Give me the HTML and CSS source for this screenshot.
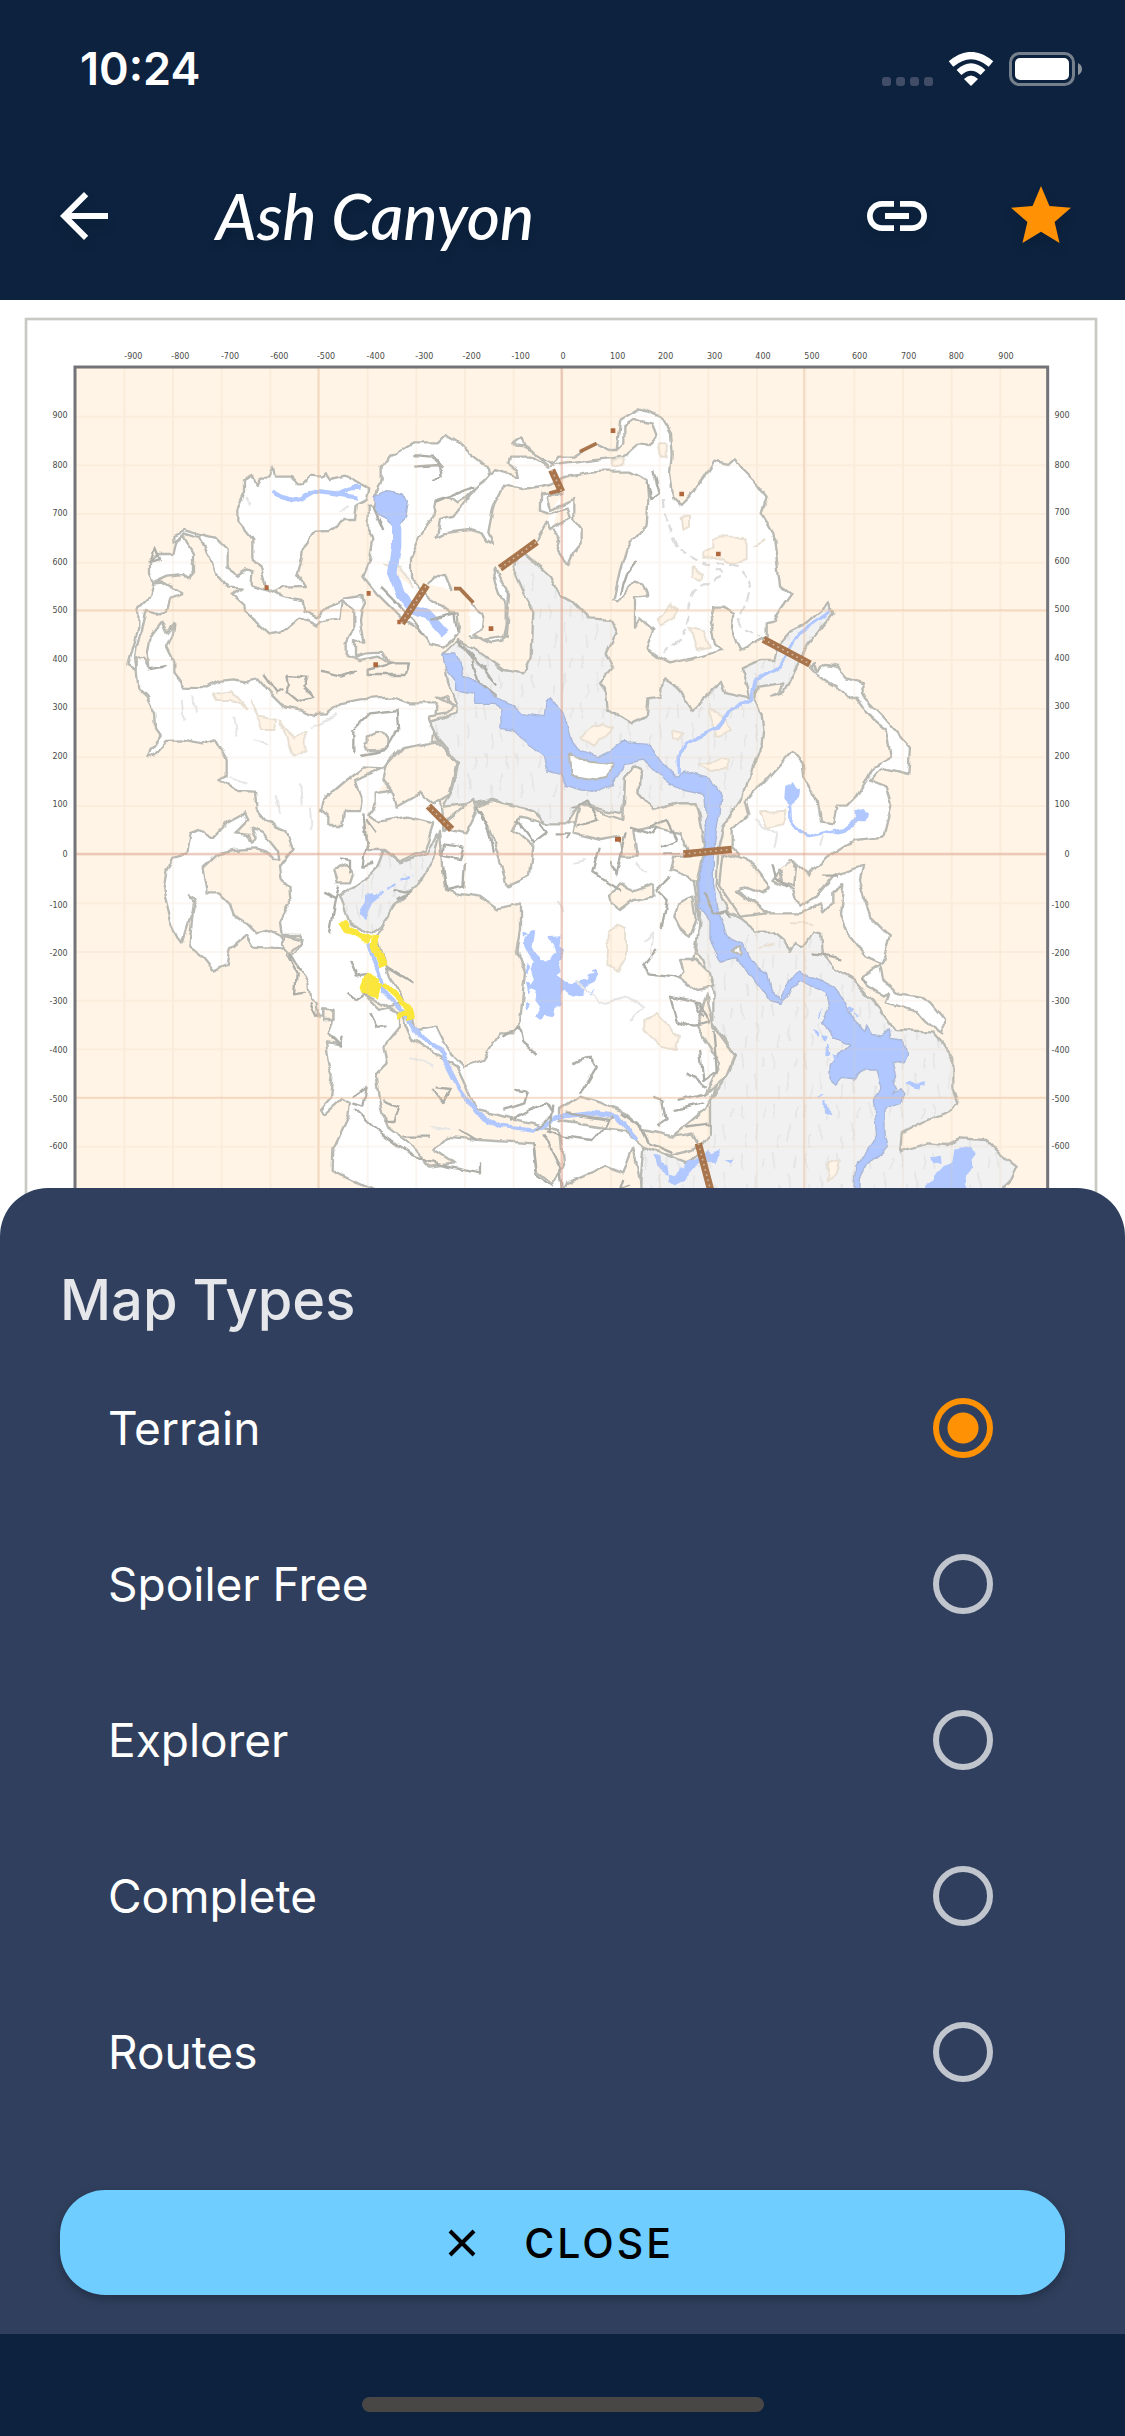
FILE: index.html
```html
<!DOCTYPE html>
<html lang="en">
<head>
<meta charset="utf-8">
<meta name="viewport" content="width=device-width, initial-scale=1">
<title>Ash Canyon</title>
<link rel="stylesheet" href="styles.css">
</head>
<body>
<div class="app">
  <header class="header">
    <div class="status">
      <time class="clock">10:24</time>
      <div class="indicators">
        <span class="signal"><i></i><i></i><i></i><i></i></span>
        <svg class="wifi" viewBox="0 0 46 34" aria-hidden="true">
          <g fill="none" stroke="#fff" stroke-width="7">
            <path d="M3 12Q23-5 43 12"/>
            <path d="M11 20.500Q23 9.500 35 20.500"/>
          </g>
          <path fill="#fff" d="M16 27Q23 20 30 27L23 34Z"/>
        </svg>
        <svg class="battery" viewBox="0 0 74 34" aria-hidden="true">
          <rect x="1.500" y="1.500" width="63" height="31" rx="9" fill="none" stroke="#76808c" stroke-width="3"/>
          <rect x="6" y="6" width="54" height="22" rx="5" fill="#fff"/>
          <path fill="#8a929c" d="M69 11q4 2 4 6t-4 6z"/>
        </svg>
      </div>
    </div>
    <div class="toolbar">
      <button class="icon-button" type="button" aria-label="Back">
        <svg viewBox="0 0 24 24"><path d="M20 11H7.830l5.590-5.590L12 4l-8 8 8 8 1.410-1.410L7.830 13H20v-2z"/></svg>
      </button>
      <h1 class="title">Ash Canyon</h1>
      <button class="icon-button" type="button" aria-label="Copy link">
        <svg viewBox="0 0 24 24"><path d="M3.900 12c0-1.710 1.390-3.100 3.100-3.100h4V7H7c-2.760 0-5 2.240-5 5s2.240 5 5 5h4v-1.900H7c-1.710 0-3.100-1.390-3.100-3.100zM8 13h8v-2H8v2zm9-6h-4v1.900h4c1.710 0 3.100 1.390 3.100 3.100s-1.390 3.100-3.100 3.100h-4V17h4c2.760 0 5-2.240 5-5s-2.240-5-5-5z"/></svg>
      </button>
      <button class="icon-button favourite" type="button" aria-label="Favourite">
        <svg viewBox="0 0 24 24"><path d="M12 17.270L18.180 21l-1.640-7.030L22 9.240l-7.190-.610L12 2 9.190 8.630 2 9.240l5.460 4.730L5.820 21z"/></svg>
      </button>
    </div>
  </header>

  <main class="map">
    <svg class="map-drawing" viewBox="0 0 3375 2808" role="img" aria-label="Terrain map of Ash Canyon">
      <defs>
        <filter id="rough" filterUnits="userSpaceOnUse" x="0" y="0" width="3375" height="2808">
          <feTurbulence type="fractalNoise" baseFrequency="0.02" numOctaves="2" seed="4"/>
          <feDisplacementMap in="SourceGraphic" scale="22" xChannelSelector="R" yChannelSelector="G"/>
        </filter>
        <pattern id="minor" x="78" y="55" width="146" height="146" patternUnits="userSpaceOnUse">
          <path d="M0 3H146M3 0V146" stroke="#e2c9a8" stroke-width="5" stroke-opacity=".22"/>
        </pattern>
        <pattern id="hatch" width="96" height="150" patternUnits="userSpaceOnUse">
          <rect width="96" height="150" fill="#f1f1f1"/>
          <path d="M14 10l6 46M60 70l4 52M84 20l-4 34M34 104l-3 40" stroke="#e6e6e6" stroke-width="5"/>
        </pattern>
      </defs>

      <!-- paper and ground -->
      <rect width="3375" height="2808" fill="#fff"/>
      <rect x="78" y="57" width="3210" height="2900" fill="none" stroke="#c9c9c3" stroke-width="8"/>
      <rect x="228" y="201" width="2915" height="2700" fill="#fff4e6"/>

      <g class="terrain" filter="url(#rough)">
        <!-- upland areas -->
        <g class="snow">
          <path d="M735 540L760 525 770 555 780 530 805 530 818 503 825 530 870 530 890 553 912 553 935 530 965 533 978 520 990 537 1035 527 1060 540 1085 555 1108 568 1100 600 1070 615 1065 660 1030 660 990 690 945 692 910 735 905 780 893 820 915 858 850 860 820 877 800 870 782 800 757 775 757 720 712 665 712 625 735 575Z"/>
          <path d="M520 705L550 690 600 705 645 715 680 750 680 800 715 825 740 808 757 815 755 855 800 870 830 880 860 890 905 900 910 935 950 955 985 925 1030 895 1090 888 1095 910 1085 930 1080 960 1090 1025 1065 1025 1065 1070 1100 1060 1150 1058 1170 1090 1140 1070 1080 1080 1040 1065 1040 1030 1060 985 1060 930 1025 905 1018 955 960 965 950 980 900 955 860 990 808 1000 770 965 735 935 733 915 700 885 728 865 685 863 645 820 630 770 600 715 550 700 520 725Z"/>
          <path d="M450 785L480 765 520 765 530 720 550 705 582 760 582 820 565 840 545 825 500 830 460 848 450 820Z"/>
          <path d="M460 848L485 845 550 885 510 900 500 935 480 940 440 930 425 1000 410 1035 405 1075 410 1110 385 1095 400 1040 415 990 415 925 450 890Z"/>
          <path d="M735 1540L745 1560 725 1580 705 1600 750 1605 760 1630 770 1615 755 1585 790 1600 830 1650 835 1680 820 1680 800 1655 770 1645 700 1650 650 1660 608 1700 620 1780 660 1780 690 1810 700 1845 740 1870 770 1900 810 1890 840 1905 870 1950 845 1945 760 1940 740 1905 690 1945 680 1995 640 2012 610 1975 565 1940 580 1800 565 1780 590 1795 560 1880 545 1930 515 1870 490 1770 500 1710 520 1670 565 1660 575 1600 600 1590 640 1613 680 1570Z"/>
          <path d="M410 1075L430 1070 445 1100 440 1060 450 1010 485 965 500 1000 520 975 515 1005 498 1040 520 1085 520 1120 550 1160 620 1162 660 1142 700 1138 740 1145 775 1138 810 1180 850 1220 900 1228 940 1245 980 1243 1020 1210 1080 1198 1180 1192 1230 1210 1310 1210 1300 1320 1330 1590 1430 1510 1600 1530 1700 1570 1850 1570 2060 1520 2070 1660 2100 1870 2080 1980 2140 2060 2180 2290 2115 2430 1960 2560 1920 2640 1930 2830 1450 2830 1130 2675 1080 2650 998 2610 1000 2545 1045 2450 1050 2410 1025 2395 970 2445 960 2430 990 2395 998 2325 985 2290 975 2230 1020 2235 985 2200 1000 2160 1000 2130 970 2125 970 2150 955 2150 950 2110 930 2100 925 2050 900 2010 870 1970 885 1960 910 1920 900 1905 845 1905 840 1865 870 1810 865 1760 845 1740 840 1700 875 1650 855 1590 800 1565 770 1530 765 1472 710 1470 655 1440 680 1430 680 1380 645 1318 600 1330 550 1318 500 1320 465 1360 445 1368 450 1350 482 1305 468 1285 465 1240 440 1190 415 1165 410 1110Z"/>
          <path d="M1190 460L1240 430 1310 430 1335 405 1380 430 1410 460 1460 500 1465 530 1430 560 1400 590 1370 610 1345 590 1310 600 1300 650 1260 710 1230 780 1230 830 1290 900 1350 940 1370 940 1375 1000 1330 1040 1290 1030 1260 990 1200 950 1130 880 1090 830 1110 780 1120 710 1103 680 1103 620 1125 620 1130 580 1145 540 1145 500 1170 465Z"/>
          <path d="M1850 450L1860 360 1920 325 1980 350 2010 400 2015 460 2010 520 2020 590 2045 615 2070 590 2105 540 2140 485 2185 495 2205 475 2230 510 2260 540 2300 590 2285 640 2320 700 2330 780 2340 855 2375 880 2340 930 2320 965 2300 970 2300 1010 2220 1050 2210 1030 2195 990 2200 940 2170 920 2145 920 2130 970 2145 1030 2170 1050 2080 1075 2010 1090 1980 1075 1940 1045 1960 990 1920 955 1905 980 1905 890 1945 885 1930 850 1900 845 1855 905 1840 900 1860 810 1880 745 1940 680 1945 600 1940 540 1890 515 1800 515 1700 530 1650 555 1570 570 1510 560 1480 620 1465 700 1480 735 1460 725 1445 700 1410 690 1330 700 1310 710 1320 660 1360 650 1430 560 1450 545 1480 510 1560 530 1555 510 1525 490 1530 470 1590 470 1640 500 1700 490 1870 470 1915 430 1950 435 1970 410 1955 370 1900 360 1870 380 1870 430 1850 450Z"/>
          <path d="M1645 500L1580 440 1535 435 1565 415 1575 445 1660 495M1660 500L1680 470 1720 470 1760 445M1790 430L1830 450 1850 450M1690 575L1620 580 1620 630 1650 640 1700 625 1710 655 1650 690 1640 665 1610 720M1660 690L1680 710 1670 750 1705 795 1720 760 1745 730 1745 690 1720 660 1720 600 1650 630 1640 590 1690 575"/>
          <path d="M1280 855L1300 825 1335 825 1355 870M1410 910L1450 945 1445 985 1420 1000 1450 1020 1520 1010 1530 880 1500 840 1485 805 1480 830 1500 890 1520 900 1520 970 1510 1025 1480 1030 1410 1005"/>
          <path d="M2375 1355L2300 1440 2240 1500 2250 1540 2195 1590 2195 1640 2220 1665 2200 1750 2240 1790 2300 1840 2400 1840 2460 1810 2470 1840 2500 1810 2500 1770 2530 1750 2520 1840 2540 1900 2600 1970 2645 1990 2670 1910 2610 1850 2580 1740 2590 1695 2500 1730 2450 1790 2395 1820 2380 1770 2320 1740 2370 1680 2430 1725 2480 1670 2560 1620 2610 1615 2650 1610 2675 1510 2660 1460 2610 1440 2640 1405 2725 1425 2730 1340 2650 1250 2580 1180 2590 1150 2540 1135 2510 1100 2480 1095 2450 1110 2440 1090 2430 1100 2460 1130 2510 1160 2540 1195 2570 1190 2620 1260 2660 1290 2675 1370 2620 1400 2600 1440 2570 1490 2540 1520 2510 1520 2500 1570 2460 1565 2450 1500 2410 1430 2405 1390Z"/>
          <path d="M2640 1995L2585 2030 2600 2060 2650 2090 2670 2080 2660 2110 2720 2130 2750 2135 2770 2160 2830 2200 2832 2160 2790 2110 2760 2090 2700 2080 2650 2040Z"/>
        </g>

        <!-- frozen basins -->
        <g class="basin">
          <path d="M1535 800L1570 880 1600 930 1595 1070 1570 1120 1510 1110 1440 1060 1370 1020 1330 1060 1345 1150 1370 1210 1360 1240 1290 1265 1315 1320 1375 1390 1360 1460 1330 1520 1420 1510 1470 1500 1600 1530 1640 1570 1700 1570 1740 1510 1810 1530 1870 1540 1875 1440 1900 1400 1920 1410 1915 1480 1960 1530 2040 1510 2090 1510 2100 1550 2115 1640 2090 1740 2100 1840 2090 1960 2110 1980 2140 2080 2140 2170 2205 2270 2180 2330 2130 2400 2130 2500 2090 2560 2060 2590 1930 2540 1920 2660 1920 2830 3010 2830 3010 2660 3030 2640 3050 2600 3010 2570 2990 2550 2960 2520 2880 2515 2840 2535 2780 2530 2700 2555 2705 2500 2760 2470 2860 2430 2875 2410 2860 2370 2860 2280 2830 2230 2800 2195 2685 2190 2640 2130 2560 2040 2500 2005 2465 1960 2460 1900 2440 1895 2410 1940 2385 1925 2370 1955 2350 1920 2320 1895 2270 1895 2220 1855 2190 1840 2150 1760 2155 1640 2170 1580 2230 1490 2250 1420 2285 1330 2290 1290 2285 1240 2265 1200 2270 1160 2350 1150 2340 1180 2310 1190 2350 1180 2395 1090 2410 1050 2500 940 2485 925 2480 905 2465 930 2420 970 2370 995 2330 1040 2320 1080 2280 1080 2225 1105 2240 1150 2250 1195 2180 1180 2165 1145 2120 1190 2075 1230 2030 1160 1990 1135 1980 1190 1945 1195 1940 1250 1895 1270 1820 1225 1815 1170 1800 1150 1840 1105 1820 1060 1850 1000 1830 960 1770 955 1720 905 1680 890 1650 830 1570 760Z"/>
          <path d="M1150 1650L1200 1690 1280 1660 1310 1600 1320 1620 1300 1700 1260 1760 1190 1810 1150 1870 1110 1900 1050 1870 1020 1790 1080 1750 1130 1700Z"/>
        </g>

        <!-- rock outcrops -->
        <g class="rock">
          <path d="M1130 1910L1150 1870 1190 1810 1250 1760 1300 1680 1320 1590 1335 1770 1370 1780 1440 1790 1490 1825 1560 1810 1560 1890 1550 1950 1575 2020 1560 2170 1540 2200 1500 2200 1450 2280 1390 2300 1350 2260 1310 2180 1250 2190 1230 2130 1170 2030Z"/>
          <path d="M1200 1350L1150 1405 1090 1402 1040 1440 970 1500 960 1530 985 1550 985 1575 1030 1575 1035 1530 1080 1530 1085 1500 1065 1440 1160 1400 1170 1440 1185 1470 1130 1480 1130 1510 1105 1545 1140 1565 1220 1550 1300 1570 1275 1650 1200 1685 1155 1650 1105 1650 1090 1580"/>
          <path d="M1210 1345L1160 1400 1150 1440 1180 1480 1190 1520 1260 1480 1300 1510 1350 1480 1370 1390 1310 1325Z"/>
          <path d="M1430 1520L1470 1500 1600 1530 1640 1570 1560 1550 1540 1590 1600 1640 1590 1730 1520 1760 1500 1680 1470 1590Z"/>
          <path d="M1340 1560L1420 1500 1430 1540 1400 1600 1350 1590Z"/>
          <path d="M1740 1510L1810 1540 1870 1560 1875 1440 1900 1400 1920 1410 1915 1480 1960 1530 2040 1510 2090 1510 2100 1550 2115 1640 2090 1740 2010 1710 2020 1670 2070 1670 2040 1600 1950 1580 1900 1590 1910 1670 1870 1670 1860 1610 1800 1620 1720 1600Z"/>
          <path d="M1830 1790L1860 1750 1900 1770 1960 1750 1960 1790 1900 1800 1860 1830 1835 1810Z"/>
          <path d="M2080 1790L2030 1810 2020 1850 2040 1890 2070 1910 2090 1860Z"/>
          <path d="M2040 1980L2090 1980 2130 2020 2140 2060 2090 2070 2030 2030 2050 2010Z"/>
          <path d="M2120 2080L2140 2180 2205 2270 2180 2330 2120 2380 2160 2290 2090 2180Z"/>
          <path d="M1370 1220L1310 1190 1345 1195 1355 1220 1340 1240 1285 1250 1290 1265 1370 1240Z"/>
          <path d="M1090 2080L1140 2130 1200 2110 1200 2180 1150 2240 1160 2290 1130 2320 1140 2400 1160 2480 1240 2540 1290 2600 1360 2590 1300 2550 1340 2510 1440 2520 1600 2530 1610 2610 1660 2650 1690 2600 1680 2490 1600 2470 1430 2430 1370 2300 1290 2250 1240 2220 1210 2150Z"/>
          <path d="M1680 2430L1740 2390 1810 2410 1870 2440 1930 2490 2020 2510 2080 2500 2100 2540 2010 2570 1930 2540 1870 2490 1680 2460Z"/>
          <path d="M1700 2650L1820 2600 1870 2620 1900 2540 1920 2640 1930 2800 1640 2800Z"/>
          <path d="M855 1905L910 1920 890 1940 870 1960 840 1930ZM1000 1710L1040 1695 1060 1720 1050 1750 1010 1750ZM970 2125L1000 2130 1000 2160 970 2160Z"/>
          <path d="M2170 1660L2240 1680 2260 1700 2310 1760 2290 1780 2240 1760 2210 1770 2300 1840 2220 1850 2160 1760Z"/>
          <path d="M1100 1310Q1140 1275 1160 1310T1130 1350 1100 1330Z"/>
          <path d="M2370 1680L2385 1700 2380 1760 2350 1750 2340 1710M2730 2740L2850 2700 2960 2730"/>
        </g>
        <g class="soft-rock">
          <path d="M2140 720L2160 712 2240 715 2240 780 2200 790 2170 775 2110 780 2110 760 2140 740ZM2045 650L2070 650 2070 680 2050 690ZM2075 800L2105 820 2100 840 2075 830ZM1970 960L2010 910 2030 930 2020 960 1980 980ZM2070 980L2110 990 2130 1040 2090 1050ZM1980 430L2000 430 2000 470 1985 470ZM1830 480L1870 475 1870 495 1835 500Z"/>
          <path d="M1740 1310L1810 1270 1840 1280 1780 1340ZM2020 1290L2050 1300 2040 1320 2020 1310ZM2095 1390L2180 1375 2180 1410 2130 1410ZM2125 1230L2170 1250 2190 1290 2150 1310Z"/>
          <path d="M1830 1890L1850 1880 1875 1890 1875 1970 1850 2010 1825 1990ZM1930 2160L1970 2145 2040 2210 2030 2250 1980 2240 1930 2190ZM2280 1540L2360 1535 2350 1570 2300 1580ZM2485 2590L2520 2580 2510 2620 2480 2640Z"/>
          <path d="M755 1200L780 1250 830 1260 820 1290 790 1290ZM840 1260L880 1320 920 1290 920 1350 880 1370ZM640 1180L690 1170 740 1225 690 1200 650 1200ZM2280 1945L2320 1930M1150 790L1200 800 1240 870M2370 1870L2440 1870M2260 740L2300 720"/>
        </g>

        <!-- water -->
        <g class="water">
          <path d="M1325 1065L1370 1065 1395 1130 1440 1150 1480 1190 1530 1210 1560 1240 1630 1250 1635 1200 1650 1195 1690 1240 1710 1310 1740 1350 1790 1370 1830 1350 1870 1325 1950 1330 1970 1370 2030 1430 2050 1410 2120 1430 2165 1480 2155 1560 2140 1650 2140 1750 2150 1820 2170 1870 2180 1910 2230 1935 2250 1980 2300 2020 2310 2070 2340 2100 2370 2040 2400 2010 2440 2030 2500 2060 2530 2100 2560 2160 2595 2195 2600 2175 2615 2200 2645 2205 2665 2190 2670 2215 2710 2220 2720 2260 2710 2285 2680 2290 2690 2330 2680 2350 2690 2370 2680 2385 2700 2372 2712 2388 2700 2410 2655 2430 2655 2500 2665 2540 2600 2590 2575 2640 2570 2740 2550 2740 2565 2600 2610 2540 2630 2510 2620 2400 2640 2360 2625 2310 2590 2310 2560 2340 2530 2335 2510 2358 2490 2340 2490 2300 2510 2260 2550 2240 2500 2210 2470 2165 2490 2130 2480 2080 2430 2055 2400 2040 2370 2080 2340 2110 2310 2100 2260 2030 2200 1970 2160 1980 2130 1920 2130 1860 2100 1820 2095 1740 2115 1660 2120 1560 2115 1490 2050 1470 1990 1440 1930 1380 1880 1390 1840 1450 1770 1480 1700 1460 1680 1420 1640 1410 1630 1370 1580 1330 1540 1290 1500 1285 1500 1260 1510 1230 1480 1210 1425 1210 1420 1180 1370 1170 1370 1140 1330 1090Z"/>
          <path d="M1125 590L1160 575 1210 585 1222 610 1215 650 1195 685 1160 655 1130 640Z"/>
          <path d="M1865 2560"/>
        </g>
        <g class="marsh">
          <path d="M1570 1930L1585 1912 1592 1895 1604 1890 1600 1920 1592 1940 1604 1962 1622 1980 1650 1980 1668 1960 1660 1925 1645 1910 1680 1908 1676 1940 1690 1950 1672 1985 1680 2010 1668 2030 1690 2045 1720 2052 1760 2040 1762 2028 1790 2020 1780 2040 1760 2050 1745 2080 1715 2085 1690 2072 1680 2100 1684 2120 1665 2125 1660 2150 1635 2145 1640 2130 1620 2160 1608 2150 1622 2120 1608 2100 1612 2070 1590 2060 1604 2040 1594 2010 1600 1985 1582 1960ZM1578 1990l10 14-8 18zM1580 2050l14 8-8 22zM1775 2015l12-4 4 10zM1780 2070l-14 14zM1572 1900l10 4-8 8zM1576 2110l10 8-6 10z"/>
          <path d="M2360 1460L2375 1462 2378 1452 2388 1470 2398 1468 2395 1490 2382 1500 2370 1520 2358 1495ZM2568 1535L2590 1532 2605 1545 2598 1562 2570 1562Z"/>
          <path d="M2865 2550L2885 2538 2915 2545 2925 2565 2912 2582 2920 2605 2898 2620 2892 2650 2900 2675 2880 2740 2770 2740 2775 2650 2800 2645 2815 2622 2835 2600 2858 2592Z"/>
          <path d="M1960 2570L1972 2572 1980 2590 2000 2598 2005 2620 1985 2610 1970 2595ZM2012 2620l16 6 10-18 18-4 8-20 20-8-6 22-16 18-12 24-26 14-18-10zM2110 2560l14-8 12 10 20-10 4 14-14 18-18-4-18 12-14-6-16 10 8-24zM2178 2580l18-2-4 10z"/>
          <path d="M1080 1840L1090 1815 1098 1790 1120 1785 1140 1790 1118 1808 1108 1828 1098 1855ZM2722 2350l10-6 12 8 14 2-8 12-14-2zM2758 2350l14-4-4 12zM2445 2190l10 4-4 12zM2465 2200l16 8-6 12zM2470 2075l18-10zM2545 2120l16 8-6 10zM2560 2145l10 8zM2465 2130l-6 22zM2483 2230l6 26-8 8zM2455 2395l10-8zM2472 2408l10 20 10 12-18-4zM2790 2575l14 4 20-4 2 14-24 2zM2498 2262l10 4-6 12z"/>
        </g>
        <path class="island" d="M1710 1360L1750 1380 1840 1390 1820 1430 1780 1440 1715 1430ZM2195 1950L2225 1945 2220 1970Z"/>
        <g class="stream">
          <path stroke-width="28" d="M1190 660L1190 740 1178 820 1200 880 1240 930 1290 950 1335 1000"/>
          <path stroke-width="10" d="M2035 1420L2035 1370 2060 1330 2150 1285 2190 1230 2255 1200 2265 1140 2340 1100 2400 1000 2490 935"/>
          <path stroke-width="13" d="M818 575L870 603 900 598 940 575 1010 583 1050 565 1085 563M1010 583L1075 593"/>
          <path stroke-width="8" d="M2370 1520L2372 1560 2400 1595 2450 1607 2500 1595"/>
          <path stroke-width="16" d="M2500 1595L2535 1588 2570 1560"/>
          <path stroke-width="13" d="M1105 1930L1120 1980 1140 2030 1150 2080 1190 2120 1230 2160 1260 2210 1320 2245 1345 2300 1380 2370 1430 2440 1500 2480 1600 2492 1680 2450 1770 2440 1850 2450 1910 2520"/>
          <path stroke-width="7" stroke-dasharray="30 12" d="M1130 1790L1180 1750 1240 1725"/>
        </g>

        <!-- cliffs and ledges -->
        <g class="ledge">
          <path d="M790 1125L830 1180 850 1170M865 1125L920 1130 910 1160 940 1190 890 1205 860 1180 870 1150ZM960 1115L1020 1130 1065 1115 1050 1130M1100 1110L1180 1090 1230 1090 1220 1125 1100 1125ZM1060 1360L1060 1290 1110 1240 1190 1230 1195 1290 1160 1350 1080 1365M1140 860L1240 960 1270 1000M445 1105L500 1095M450 790L465 745 480 780 445 790M1310 605L1420 560M1150 690L1120 620"/>
          <path d="M1370 1020L1420 1080 1440 1150 1490 1190M1390 1040L1450 1100 1490 1160M1860 880L1880 820 1910 780M1940 550L1955 600 1980 580 1960 510M1240 500L1320 495 1325 530 1300 540M1240 465L1300 470 1330 500M1290 960L1360 940 1370 1000"/>
          <path d="M1335 1630L1390 1640 1380 1680 1330 1670ZM1330 1700L1340 1770 1390 1760 1395 1690M1430 1520L1460 1570 1480 1660M1550 1560L1600 1630 1640 1600 1620 1570M1670 1600L1710 1600 1700 1620M1720 1520L1760 1505 1790 1560 1730 1580M1950 1580L2000 1560 2030 1620 1980 1640M1800 1640L1780 1720 1860 1770M1830 1680L1850 1720 1880 1600M2010 1730L1970 1770 2000 1800 1985 1890"/>
          <path d="M1970 1950L1930 2000 1950 2020 2030 2030M2010 2090L2030 2160 2080 2180 2130 2170 2100 2110ZM2090 2110L2110 2150M2100 2250L2110 2340 2150 2310 2140 2190M2060 2320L2120 2360M1720 2290L1770 2270 1790 2300 1760 2350 1740 2380M1545 2370L1580 2375 1570 2410 1510 2430M1960 2390L1990 2400 2000 2460 1970 2480M2030 2400L2120 2380M2020 2430L2110 2410M1300 2370L1330 2410 1350 2370 1310 2365M1150 2400L1195 2420 1180 2460 1150 2460M1050 1980L1070 2030 1100 2025M1040 2075L1070 2100 1100 2080M1110 2140L1130 2180 1160 2180M970 1775L1010 1795 1020 1760M1020 1675L1050 1680 1050 1720M990 2210L1020 2240 1025 2210M1060 2390L1100 2360 1090 2420 1060 2410M1065 2430L1130 2490 1240 2570 1340 2600 1440 2620 1440 2590M1210 2510L1290 2510M1380 2490L1430 2520M1530 2460L1590 2430 1640 2410 1660 2440 1610 2490M1640 2490L1690 2510 1780 2520 1840 2450M1860 2440L1930 2490 1950 2530 2020 2560M1600 2530L1610 2620 1660 2660M1630 2500L1680 2600 1690 2680M1100 1560L1130 1600M1090 1540L1100 1640 1090 1700 1120 1690M1660 2420L1650 2500M1510 2210L1560 2180 1570 2230 1610 2265M1870 2640L1860 2670 1890 2660M860 1960L890 2020 885 2080 915 2075M930 2110L950 2150M870 1960L900 2010M2320 1690L2330 1730 2360 1760M2470 1730L2520 1730M2440 1960L2530 1975M2585 2030L2600 2050"/>
          <path d="M1180 1770L1230 1780 1190 1800M1890 1580L1960 1600 1970 1580M1990 1660L2040 1660M2110 1780L2140 1840 2180 1830 2190 1850M1010 1790L1000 1840 990 1900M1240 2050L1160 2000M1700 2440L1830 2460M2130 2470L2060 2480"/>
        </g>
        <g class="contour">
          <path d="M1720 1690L1760 1680M1730 2040L1800 2110 1880 2090 1930 2120 1890 2160M1910 1690L1940 1720M1670 1800L1690 1840M1930 1920L1960 1900 1950 1980M2260 1560L2330 1600 2320 1640M2460 1640L2470 1610M1290 2480L1350 2490M1300 2300L1230 2270M545 1200L550 1260M580 1190L585 1240M700 1250L710 1310M830 1480L840 1540M900 1450L905 1510M930 1520L935 1590M760 1320L800 1330M690 1430L740 1450M930 1280L1010 1245M740 590L750 620M1020 640L1050 620"/>
        </g>
        <path class="trail" d="M1992 600C1995 700 2030 760 2110 790S2180 830 2120 850 2080 920 2060 980 2000 1030 1990 1060M2150 790C2250 780 2270 860 2230 920S2250 990 2280 1010"/>
        <g class="vein">
          <path stroke-width="24" d="M1028 1865L1040 1885 1075 1905 1110 1922"/>
          <path stroke-width="26" d="M1128 1905L1125 1940 1150 2000"/>
          <path stroke-width="42" d="M1118 2030L1105 2065 1140 2075"/>
          <path stroke-width="20" d="M1150 2055L1190 2090 1220 2120 1235 2160"/>
          <path stroke-width="20" d="M1190 2150L1230 2135"/>
        </g>
      </g>

      <!-- grid -->
      <rect x="228" y="201" width="2915" height="2700" fill="url(#minor)"/>
      <path d="M955 201V2808M2412 201V2808M228 931H3142M228 2393H3142" stroke="#e8b893" stroke-width="6" stroke-opacity=".4"/>
      <path d="M1685 201V2808M228 1662H3142" stroke="#dca08c" stroke-width="7" stroke-opacity=".5"/>
      <rect x="225" y="201" width="2918" height="2800" fill="none" stroke="#72747a" stroke-width="9"/>

      <!-- crossings and finds -->
      <g class="bridge">
        <path d="M1500 805L1610 725M1205 970L1280 855M2290 1018L2430 1092M1285 1518L1355 1588M2050 1662L2195 1648M2095 2530L2145 2720M1655 510L1685 575"/>
      </g>
      <path class="ties" d="M1500 805L1610 725M1205 970L1280 855M2290 1018L2430 1092M1285 1518L1355 1588M2050 1662L2195 1648M2095 2530L2145 2720M1655 510L1685 575"/>
      <path d="M1740 455L1790 430M1648 580L1675 572M1362 866L1380 866 1420 908" fill="none" stroke="#a8754c" stroke-width="11"/>
      <path d="M794 863h12M1100 880h12M1120 1094h14M1832 392h14M2038 582h14M2148 762h14M1466 986h14M1845 1618h18M1192 966h10" stroke="#b0683f" stroke-width="14"/>

      <g class="axis axis-top">
        <text x="400" y="176">-900</text><text x="541" y="176">-800</text><text x="690" y="176">-700</text><text x="838" y="176">-600</text><text x="978" y="176">-500</text><text x="1127" y="176">-400</text><text x="1273" y="176">-300</text><text x="1415" y="176">-200</text><text x="1562" y="176">-100</text><text x="1689" y="176">0</text><text x="1853" y="176">100</text><text x="1997" y="176">200</text><text x="2144" y="176">300</text><text x="2289" y="176">400</text><text x="2436" y="176">500</text><text x="2579" y="176">600</text><text x="2726" y="176">700</text><text x="2869" y="176">800</text><text x="3018" y="176">900</text>
      </g>
      <g class="axis axis-side">
        <text x="203" y="355">900</text><text x="203" y="505">800</text><text x="203" y="648">700</text><text x="203" y="794">600</text><text x="203" y="939">500</text><text x="203" y="1085">400</text><text x="203" y="1230">300</text><text x="203" y="1378">200</text><text x="203" y="1521">100</text><text x="203" y="1670">0</text><text x="203" y="1823">-100</text><text x="203" y="1967">-200</text><text x="203" y="2111">-300</text><text x="203" y="2258">-400</text><text x="203" y="2406">-500</text><text x="203" y="2546">-600</text>
      </g>
      <g class="axis axis-side">
        <text x="3209" y="353">900</text><text x="3209" y="503">800</text><text x="3209" y="646">700</text><text x="3209" y="792">600</text><text x="3209" y="937">500</text><text x="3209" y="1083">400</text><text x="3209" y="1228">300</text><text x="3209" y="1376">200</text><text x="3209" y="1520">100</text><text x="3209" y="1670">0</text><text x="3209" y="1823">-100</text><text x="3209" y="1967">-200</text><text x="3209" y="2111">-300</text><text x="3209" y="2258">-400</text><text x="3209" y="2406">-500</text><text x="3209" y="2546">-600</text>
      </g>
    </svg>
  </main>

  <form class="sheet">
    <fieldset class="types">
      <legend class="sheet-title">Map Types</legend>
      <label class="option"><span>Terrain</span><input class="radio" type="radio" name="map-type" value="terrain" checked></label>
      <label class="option"><span>Spoiler Free</span><input class="radio" type="radio" name="map-type" value="spoiler-free"></label>
      <label class="option"><span>Explorer</span><input class="radio" type="radio" name="map-type" value="explorer"></label>
      <label class="option"><span>Complete</span><input class="radio" type="radio" name="map-type" value="complete"></label>
      <label class="option"><span>Routes</span><input class="radio" type="radio" name="map-type" value="routes"></label>
    </fieldset>
    <button class="close" type="button">
      <svg viewBox="0 0 28 28" aria-hidden="true"><path d="M2 2L26 26M26 2L2 26" stroke="#000" stroke-width="4"/></svg>
      <span>CLOSE</span>
    </button>
  </form>
  <footer class="home"><div class="home-bar"></div></footer>
</div>
</body>
</html>
```
FILE: styles.css
```css
* { box-sizing: border-box; }

body {
  margin: 0;
  background: #0c223e;
  color: #fff;
  font-family: Inter, "Liberation Sans", sans-serif;
}

button { border: 0; padding: 0; background: none; font: inherit; }

.app { display: flex; flex-direction: column; min-height: 100vh; }

/* Header */
.header { background: #0c223e; }

.status {
  display: flex;
  justify-content: space-between;
  align-items: center;
  height: 132px;
  padding: 6px 42px 0 80px;
}

.clock { font-size: 45px; line-height: 54px; font-weight: 600; }

.indicators { display: flex; align-items: center; gap: 15px; }

.signal { display: flex; gap: 5px; align-self: flex-end; }
.signal i { width: 9px; height: 9px; border-radius: 3px; background: #414c66; }

.wifi { width: 46px; height: 34px; }
.battery { width: 74px; height: 34px; }

.toolbar {
  display: flex;
  align-items: center;
  gap: 72px;
  height: 168px;
  padding: 0 48px;
}

.icon-button { width: 72px; height: 72px; flex: none; }
.icon-button svg {
  display: block;
  width: 72px;
  height: 72px;
  fill: #fff;
  filter: drop-shadow(0 6px 6px rgba(0, 0, 0, .1));
}
.icon-button.favourite svg { fill: #ff9104; }

.title {
  flex: 1;
  margin: 0;
  padding-left: 24px;
  font-family: Satisfy, Lato, cursive;
  font-style: italic;
  font-weight: 500;
  font-size: 64px;
  line-height: 84px;
  text-shadow: 0 6px 8px rgba(0, 0, 0, .12);
}

/* Map */
.map { background: #fff; }
.map-drawing { display: block; width: 100%; height: auto; }

.terrain { stroke-linejoin: round; fill: none; }
.snow { fill: #fff; stroke: #b9b9b3; stroke-width: 7; }
.basin { fill: url(#hatch); stroke: #b9b9b3; stroke-width: 7; }
.rock { fill: #fff4e6; stroke: #b9b9b3; stroke-width: 7; }
.soft-rock { fill: #fff4e6; stroke: #e9e0d4; stroke-width: 6; }
.water { fill: #b0c8ff; stroke: #a9b6d6; stroke-width: 4; }
.marsh { fill: #b0c8ff; stroke: #b0c8ff; stroke-width: 4; }
.island { fill: #fff; stroke: #b9b9b3; stroke-width: 6; }
.stream { stroke: #b0c8ff; }
.ledge { stroke: #aeaea9; stroke-width: 7; }
.contour { stroke: #e6e6e6; stroke-width: 6; }
.trail { stroke: #dcdcdc; stroke-width: 7; stroke-dasharray: 24 16; }
.vein { stroke: #fbe73a; }
.bridge { fill: none; stroke: #a8754c; stroke-width: 22; }
.ties { fill: none; stroke: #d3b79f; stroke-width: 5; stroke-dasharray: 5 11; }

.axis {
  font-family: "DejaVu Sans", sans-serif;
  font-size: 24px;
  fill: #4c4c48;
}
.axis-top { text-anchor: middle; }
.axis-side { text-anchor: end; }

/* Bottom sheet */
.sheet {
  position: relative;
  flex: 1;
  margin-top: -48px;
  padding: 76px 60px 39px;
  border-radius: 48px 48px 0 0;
  background: #2f3f5d;
}

.types { margin: 0 0 60px; padding: 0; border: 0; min-width: 0; }

.sheet-title {
  padding: 0 0 14px;
  color: #e6e7ea;
  font-size: 56px;
  line-height: 72px;
  font-weight: 500;
}

.option {
  display: flex;
  align-items: center;
  justify-content: space-between;
  height: 156px;
  padding: 0 72px 0 48px;
  font-size: 46px;
  line-height: 60px;
}

.radio {
  appearance: none;
  width: 60px;
  height: 60px;
  margin: 0;
  border: 6px solid #c1c5ce;
  border-radius: 50%;
}
.radio:checked {
  border-color: #ff9104;
  background: radial-gradient(circle, #ff9104 15px, transparent 16px);
}

.close {
  display: flex;
  align-items: center;
  justify-content: center;
  gap: 48px;
  width: 100%;
  height: 105px;
  padding-right: 3px;
  border-radius: 45px;
  background: #6fcdff;
  color: #000;
  font-size: 41px;
  font-weight: 500;
  letter-spacing: 3px;
  box-shadow: 0 4px 10px rgba(0, 0, 0, .25);
}
.close svg { width: 28px; height: 28px; }

/* Home indicator */
.home {
  display: flex;
  justify-content: center;
  align-items: flex-end;
  height: 102px;
  padding-bottom: 24px;
  background: #0c223e;
}
.home-bar { width: 402px; height: 15px; border-radius: 8px; background: #484745; }
```
